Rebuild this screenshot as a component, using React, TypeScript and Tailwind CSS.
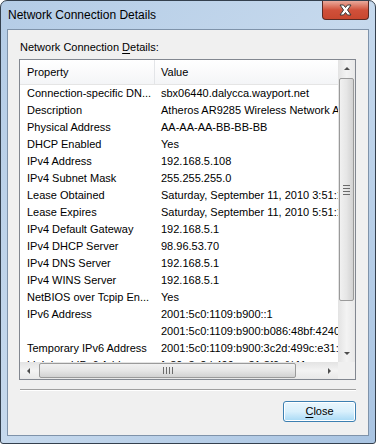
import React from 'react'

const rows: [string, string][] = [
  ['Connection-specific DN...', 'sbx06440.dalycca.wayport.net'],
  ['Description', 'Atheros AR9285 Wireless Network Adapter'],
  ['Physical Address', 'AA-AA-AA-BB-BB-BB'],
  ['DHCP Enabled', 'Yes'],
  ['IPv4 Address', '192.168.5.108'],
  ['IPv4 Subnet Mask', '255.255.255.0'],
  ['Lease Obtained', 'Saturday, September 11, 2010 3:51:13 AM'],
  ['Lease Expires', 'Saturday, September 11, 2010 5:51:13 AM'],
  ['IPv4 Default Gateway', '192.168.5.1'],
  ['IPv4 DHCP Server', '98.96.53.70'],
  ['IPv4 DNS Server', '192.168.5.1'],
  ['IPv4 WINS Server', '192.168.5.1'],
  ['NetBIOS over Tcpip En...', 'Yes'],
  ['IPv6 Address', '2001:5c0:1109:b900::1'],
  ['', '2001:5c0:1109:b900:b086:48bf:4240:2c1f'],
  ['Temporary IPv6 Address', '2001:5c0:1109:b900:3c2d:499c:e31:8f0a'],
  ['Link-local IPv6 Address', 'fe80::3c2d:499c:e31:8f0a%11'],
]

const Arrow = ({ dir }: { dir: 'up' | 'down' | 'left' | 'right' }) => {
  const pts = {
    up: '1,5 4,2 7,5',
    down: '1,2 4,5 7,2',
    left: '5,1 2,4 5,7',
    right: '2,1 5,4 2,7',
  }[dir]
  return (
    <svg width="8" height="8" viewBox="0 0 8 8">
      <polygon points={pts} fill="#4d4d4d" />
    </svg>
  )
}

const App = () => {
  return (
    <div
      className="w-[376px] h-[444px] flex flex-col border border-[#34404e] rounded-t-[7px] rounded-b-[3px] px-[6px] pb-[7px] bg-gradient-to-br from-[#b4cce6] via-[#c6d9ed] to-[#a9c4e2]"
      style={{ fontFamily: '"Liberation Sans", Arial, sans-serif' }}
    >
      {/* title bar */}
      <div className="h-[28px] flex items-start">
        <div className="pl-[1px] pt-[7px] text-[12px] leading-[15px] text-black">Network Connection Details</div>
        <div className="ml-auto mt-0 w-[47px] h-[19px] rounded-b-[4px] border border-t-0 border-[#5a2a24] bg-gradient-to-b from-[#e9a99b] via-[#d0503a] to-[#c8472f] flex items-center justify-center">
          <svg width="15" height="12" viewBox="0 0 15 12">
            <path
              d="M2 1 L5.5 1 L7.5 3.5 L9.5 1 L13 1 L9.5 6 L13 11 L9.5 11 L7.5 8.5 L5.5 11 L2 11 L5.5 6 Z"
              fill="#ffffff"
              stroke="#3a3a3a"
              strokeWidth="1"
            />
          </svg>
        </div>
      </div>

      {/* client area */}
      <div className="flex-1 border border-[#7f93aa] bg-[#f0f0f0] flex flex-col pl-[11px] pr-[12px] pt-[11px] text-[11px] text-black">
        <div className="pl-[1px] leading-[13px] mb-[5px]">
          Network Connection <span className="underline underline-offset-2">D</span>etails:
        </div>

        {/* list view */}
        <div className="h-[321px] border border-[#828790] bg-white flex flex-col">
          <div className="flex h-[302px]">
            <div className="w-[319px] overflow-hidden">
              <div className="h-[25px] flex items-center border-b border-[#e5e5e5] bg-gradient-to-b from-white to-[#f4f5f7]">
                <div className="w-[135px] h-full flex items-center pl-[7px] border-r border-[#e3e5e8]">Property</div>
                <div className="pl-[6px]">Value</div>
              </div>
              {rows.map(([k, v], i) => (
                <div key={i} className="h-[17px] flex items-center whitespace-nowrap">
                  <div className="w-[135px] shrink-0 pl-[7px] overflow-hidden">{k}</div>
                  <div className="pl-[6px]">{v}</div>
                </div>
              ))}
            </div>
            {/* vertical scrollbar */}
            <div className="w-[17px] flex flex-col bg-gradient-to-r from-[#e3e3e3] via-[#f3f3f3] to-[#e8e8e8]">
              <div className="h-[17px] flex items-center justify-center">
                <Arrow dir="up" />
              </div>
              <div className="flex-1 flex flex-col px-[1px] pt-[1px]">
                <div className="h-[223px] rounded-[2px] border border-[#9a9a9a] bg-gradient-to-r from-[#f1f1f1] via-[#e6e6e6] to-[#d2d2d2] flex flex-col items-center justify-center gap-[2px]">
                  <div className="w-[7px] h-px bg-[#6b6b6b]" />
                  <div className="w-[7px] h-px bg-[#6b6b6b]" />
                  <div className="w-[7px] h-px bg-[#6b6b6b]" />
                  <div className="w-[7px] h-px bg-[#6b6b6b]" />
                </div>
              </div>
              <div className="h-[17px] flex items-center justify-center">
                <Arrow dir="down" />
              </div>
            </div>
          </div>
          {/* horizontal scrollbar */}
          <div className="flex h-[17px]">
            <div className="w-[319px] flex bg-gradient-to-b from-[#e3e3e3] via-[#f3f3f3] to-[#e8e8e8]">
              <div className="w-[17px] flex items-center justify-center">
                <Arrow dir="left" />
              </div>
              <div className="flex-1 flex py-[1px] pl-[2px]">
                <div className="w-[257px] rounded-[2px] border border-[#9a9a9a] bg-gradient-to-b from-[#f1f1f1] via-[#e6e6e6] to-[#d2d2d2] flex items-center justify-center gap-[2px]">
                  <div className="h-[7px] w-px bg-[#6b6b6b]" />
                  <div className="h-[7px] w-px bg-[#6b6b6b]" />
                  <div className="h-[7px] w-px bg-[#6b6b6b]" />
                  <div className="h-[7px] w-px bg-[#6b6b6b]" />
                </div>
              </div>
              <div className="w-[17px] flex items-center justify-center">
                <Arrow dir="right" />
              </div>
            </div>
            <div className="w-[17px] bg-[#f0f0f0]" />
          </div>
        </div>

        <div className="mt-[9px] ml-[1px] border-t border-[#a0a0a0] border-b border-b-white" />

        <div className="mt-[10px] flex justify-end">
          <button className="w-[73px] h-[21px] rounded-[3px] border border-[#3c7fb1] bg-gradient-to-b from-[#eaf6fd] via-[#d9f0fc] to-[#a7d9f5] text-[11px] leading-none shadow-[inset_0_0_0_1px_#ffffff]">
            <span className="underline underline-offset-2">C</span>lose
          </button>
        </div>
      </div>
    </div>
  )
}

export default App
